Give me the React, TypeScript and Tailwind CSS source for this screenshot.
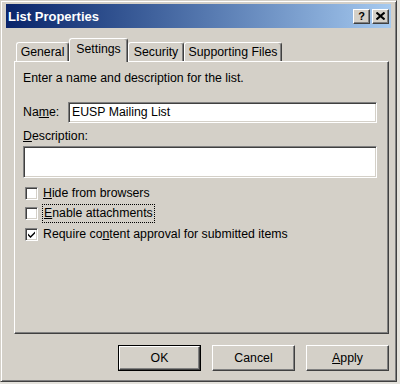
import React from "react";

const raised =
  "bg-[#d4d0c8] border-t border-l border-white border-r border-b border-r-[#404040] border-b-[#404040] shadow-[inset_-1px_-1px_0_#808080]";
const sunken =
  "bg-white border-t border-l border-[#808080] border-r border-b border-r-white border-b-white shadow-[inset_1px_1px_0_#404040,inset_-1px_-1px_0_#d4d0c8]";

const Tab = ({ label, width, active }: { label: string; width: string; active?: boolean }) => (
  <div
    className={`${width} flex items-center justify-center rounded-t-[3px] border-t border-l border-white border-r border-r-[#404040] shadow-[inset_-1px_0_0_#808080] bg-[#d4d0c8] ${
      active ? "h-[24px] -mb-[1px] z-10 pb-[3px]" : "h-[19px] pt-[1px]"
    }`}
  >
    {label}
  </div>
);

const Check = ({ checked }: { checked?: boolean }) => (
  <span className={`${sunken} w-[13px] h-[13px] flex items-center justify-center shrink-0`}>
    {checked && (
      <svg width="9" height="9" viewBox="0 0 9 9">
        <path d="M1 3.5 L3.5 6 L8 1.5 L8 3.5 L3.5 8 L1 5.5 Z" fill="#000" />
      </svg>
    )}
  </span>
);

const DlgButton = ({ children, isDefault }: { children: React.ReactNode; isDefault?: boolean }) => (
  <div className={isDefault ? "border border-black" : ""}>
    <button
      className={`${raised} flex items-center justify-center ${
        isDefault ? "w-[81px] h-[24px]" : "w-[83px] h-[26px]"
      }`}
    >
      {children}
    </button>
  </div>
);

export default function App() {
  return (
    <div className="w-[400px] h-[384px] bg-[#e4e2dc] font-['Liberation_Sans',Arial,sans-serif] text-[12.3px] text-black">
      <div className="w-[397px] h-[382px] bg-[#d4d0c8] border-t border-l border-[#d4d0c8] border-r border-b border-r-[#404040] border-b-[#404040] shadow-[inset_1px_1px_0_#fff,inset_-1px_-1px_0_#808080] pt-[3px] px-[5px] flex flex-col">
        {/* title bar */}
        <div className="h-[24px] bg-gradient-to-r from-[#0a246a] to-[#a6caf0] flex items-center justify-between pl-[2px] pr-[2px]">
          <span className="text-white font-bold text-[13px] leading-none">List Properties</span>
          <div className="flex gap-[2px]">
            <span className={`${raised} w-[17px] h-[15px] flex items-center justify-center font-bold text-[11px] leading-none`}>
              ?
            </span>
            <span className={`${raised} w-[17px] h-[15px] flex items-center justify-center`}>
              <svg width="9" height="8" viewBox="0 0 9 8">
                <path d="M0.5 0.5 L8.5 7.5 M8.5 0.5 L0.5 7.5" stroke="#000" strokeWidth="2" />
              </svg>
            </span>
          </div>
        </div>

        {/* tabs */}
        <div className="ml-[8px] mt-[9px] w-[375px]">
          <div className="flex items-end pl-[2px] h-[24px]">
            <Tab label="General" width="w-[53px]" />
            <Tab label="Settings" width="w-[59px]" active />
            <Tab label="Security" width="w-[56px]" />
            <Tab label="Supporting Files" width="w-[98px]" />
          </div>

          {/* panel */}
          <div className="h-[273px] bg-[#d4d0c8] border-t border-l border-white border-r border-b border-r-[#404040] border-b-[#404040] shadow-[inset_-1px_-1px_0_#808080] pl-[8px] pt-[9px]">
            <div className="h-[15px] leading-[15px]">Enter a name and description for the list.</div>

            <div className="flex items-center mt-[16px]">
              <span className="w-[45px]">
                Na<span className="underline">m</span>e:
              </span>
              <div className={`${sunken} w-[309px] h-[21px] flex items-center pl-[3px]`}>EUSP Mailing List</div>
            </div>

            <div className="h-[15px] leading-[15px] mt-[6px]">
              <span className="underline">D</span>escription:
            </div>
            <div className={`${sunken} w-[354px] h-[32px] mt-[2px]`} />

            <div className="mt-[5px] flex flex-col">
              <div className="h-[20px] flex items-center ml-[2px] gap-[5px]">
                <Check />
                <span>
                  <span className="underline">H</span>ide from browsers
                </span>
              </div>
              <div className="h-[21px] flex items-center ml-[2px] gap-[4px]">
                <Check />
                <span className="border border-dotted border-black px-[1px] leading-[17px]">
                  <span className="underline">E</span>nable attachments
                </span>
              </div>
              <div className="h-[21px] flex items-center ml-[2px] gap-[5px]">
                <Check checked />
                <span>
                  Require co<span className="underline">n</span>tent approval for submitted items
                </span>
              </div>
            </div>
          </div>

          {/* buttons */}
          <div className="flex justify-end gap-[11px] mt-[11px]">
            <DlgButton isDefault>OK</DlgButton>
            <DlgButton>Cancel</DlgButton>
            <DlgButton>
              <span>
                <span className="underline">A</span>pply
              </span>
            </DlgButton>
          </div>
        </div>
      </div>
    </div>
  );
}
